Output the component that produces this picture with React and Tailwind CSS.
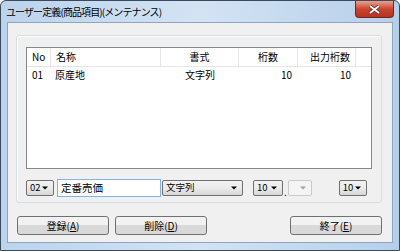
const font = { fontFamily: '"Noto Sans CJK JP", "Noto Sans", sans-serif' };

function Arrow({ disabled }) {
  return (
    <svg width="6" height="4" viewBox="0 0 6 4" className="shrink-0">
      <path d="M0 0.5h6L3 3.5z" fill={disabled ? "#a0a0a0" : "#000"} />
    </svg>
  );
}

function Combo({ value, className, disabled }) {
  return (
    <div
      className={
        "flex h-[16px] items-center justify-between rounded-[2px] border pl-[3px] pr-[5px] text-[9.5px] leading-none " +
        (disabled
          ? "border-[#c9c9c9] bg-[#f4f4f4] "
          : "border-[#707070] bg-gradient-to-b from-[#f2f2f2] via-[#ebebeb] to-[#d6d6d6] ") +
        className
      }
    >
      <span>{value}</span>
      <Arrow disabled={disabled} />
    </div>
  );
}

function Button({ label, mn, className }) {
  return (
    <div
      className={
        "flex h-[19px] items-center justify-center rounded-[3px] border border-[#707070] bg-gradient-to-b from-[#f2f2f2] from-50% to-[#d9d9d9] to-50% text-[10px] leading-none " +
        className
      }
    >
      {label}(<span className="underline">{mn}</span>)
    </div>
  );
}

export default function App() {
  return (
    <div
      className="relative h-[251px] w-[400px] overflow-hidden rounded-t-[6px] border border-[#3a4a5a] bg-gradient-to-r from-[#bcd3ec] via-[#d3e3f4] to-[#b6cfe9] text-[#000]"
      style={font}
    >
      <div className="flex h-[21px] items-start justify-between">
        <div className="pl-[5px] pt-[4px] text-[10px] leading-[13px] tracking-[-0.9px] text-[#000]">
          ユーザー定義(商品項目)(メンテナンス)
        </div>
        <div className="mr-[5px] flex h-[17px] w-[39px] items-center justify-center rounded-b-[4px] border border-t-0 border-[#6b2a22] bg-gradient-to-b from-[#e8a090] via-[#c9452f] to-[#b8321f]">
          <svg width="11" height="9" viewBox="0 0 11 9">
            <path d="M1 1l9 7M10 1L1 8" stroke="#5a2a20" strokeWidth="3.2" />
            <path d="M1 1l9 7M10 1L1 8" stroke="#fff" strokeWidth="1.8" />
          </svg>
        </div>
      </div>
      <div className="mx-[6px] mb-[7px] h-[221px] border border-[#8ea5bf] bg-[#f0f0f0] pl-[8px] pr-[10px] pt-[12px]">
        <div className="h-[168px] rounded-[3px] border border-[#d5dfe5] px-[9px] pt-[11px] shadow-[inset_1px_1px_0_#fff]">
          <div className="h-[122px] border border-[#828790] bg-white text-[10px] leading-none">
            <div className="flex h-[19px] items-center border-b border-[#e5e5e5]">
              <div className="w-[23px] pl-[5px]">No</div>
              <div className="h-full w-px bg-[#e5e5e5]" />
              <div className="w-[109px] pl-[5px]">名称</div>
              <div className="h-full w-px bg-[#e5e5e5]" />
              <div className="w-[77px] text-center">書式</div>
              <div className="h-full w-px bg-[#e5e5e5]" />
              <div className="w-[58px] text-center">桁数</div>
              <div className="h-full w-px bg-[#e5e5e5]" />
              <div className="w-[57px] pr-[5px] text-right">出力桁数</div>
              <div className="h-full w-px bg-[#e5e5e5]" />
            </div>
            <div className="flex h-[15px] items-center">
              <div className="w-[24px] pl-[5px]">01</div>
              <div className="w-[110px] pl-[4px]">原産地</div>
              <div className="w-[78px] text-center">文字列</div>
              <div className="w-[59px] pr-[6px] text-right">10</div>
              <div className="w-[58px] pr-[5px] text-right">10</div>
            </div>
          </div>
          <div className="mt-[10px] flex items-center">
            <Combo value="02" className="w-[28px]" />
            <div className="ml-[3px] flex h-[18px] w-[104px] items-center border border-[#7eb4ea] bg-white pl-[3px] text-[10.5px] leading-none">
              定番売価
            </div>
            <Combo value="文字列" className="ml-[1px] w-[81px]" />
            <Combo value="10" className="ml-[10px] w-[30px]" />
            <span className="ml-[1px] self-end text-[10px] leading-[10px]">.</span>
            <Combo value="" className="ml-[1px] w-[24px]" disabled />
            <Combo value="10" className="ml-[27px] w-[28px]" />
          </div>
        </div>
        <div className="mt-[13px] flex">
          <Button label="登録" mn="A" className="ml-[1px] w-[92px]" />
          <Button label="削除" mn="D" className="ml-[6px] w-[92px]" />
          <Button label="終了" mn="E" className="ml-auto w-[92px]" />
        </div>
      </div>
    </div>
  );
}
